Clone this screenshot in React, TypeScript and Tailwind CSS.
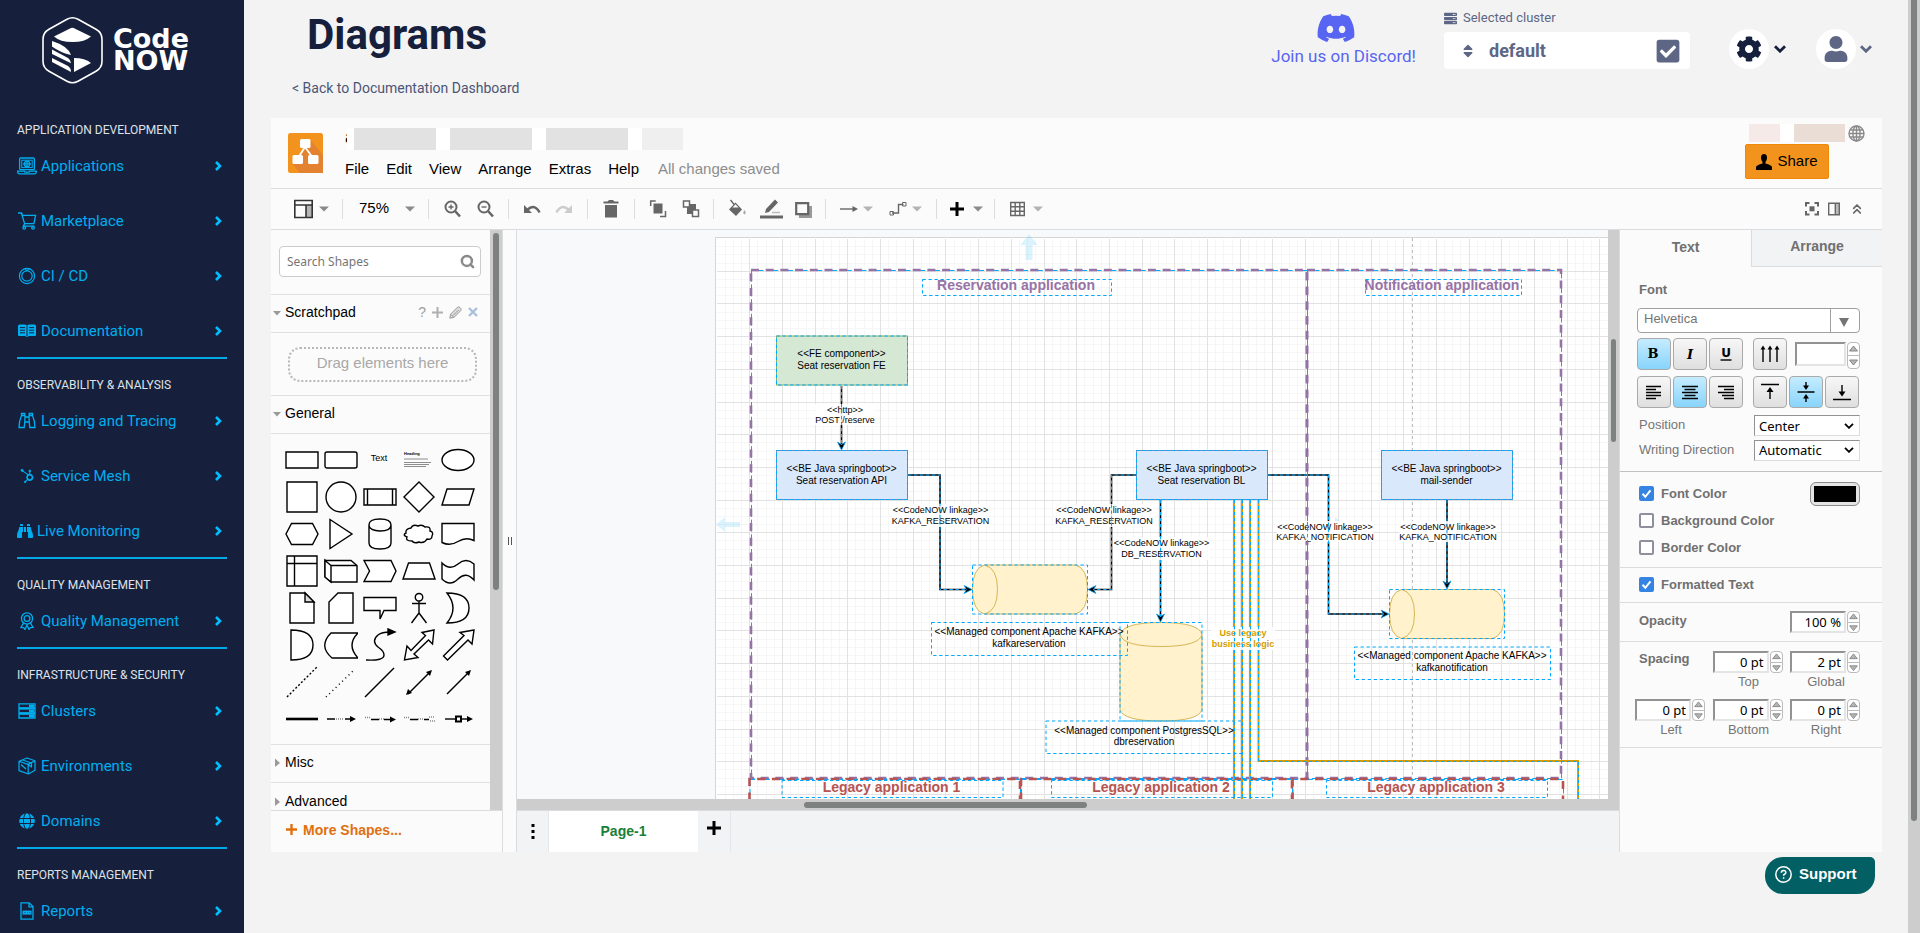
import React from "react";
import {
  FaBinoculars,
  FaCheckSquare,
  FaCog,
  FaDiscord,
  FaGlobe,
  FaHubspot,
  FaServer,
  FaSort,
  FaUser,
} from "react-icons/fa";
import { ChevronsUp, Search } from "lucide-react";

/* ---------------------------------------------------------------- sidebar */

const LaptopIcon = () => (
  <svg width="20" height="18" viewBox="0 0 20 18" fill="none" stroke="currentColor" strokeWidth="1.3">
    <rect x="2.6" y="1" width="14.8" height="11.6" rx="1.2" />
    <rect x="4.8" y="3.2" width="10.4" height="7.4" strokeWidth="1" />
    <circle cx="10" cy="6.9" r="2.7" />
    <path d="M6 6.9h8M10 4v6" />
    <path d="M.7 14.2h6.6l.6 1h4.2l.6-1h6.6v.8q0 1.8-1.8 1.8h-15Q.7 16.8.7 15z" />
  </svg>
);
const CartIcon = () => (
  <svg width="20" height="18" viewBox="0 0 20 18" fill="none" stroke="currentColor" strokeWidth="1.3">
    <path d="M1 1h3.4l3.2 10.6h9.3L18.6 3.4H5.2M4.6 3.4l.6-2.4M7.6 11.6l-1.2 2.5h11" />
    <circle cx="7.3" cy="15.8" r="1.3" />
    <circle cx="16" cy="15.8" r="1.3" />
  </svg>
);
const RingIcon = () => (
  <svg width="20" height="18" viewBox="0 0 20 18" fill="none" stroke="currentColor" strokeWidth="1.2">
    <circle cx="10" cy="9" r="7.6" />
    <circle cx="10" cy="9" r="5.2" />
    <path d="M7.6 1.4l2.4 2.4M12.4 1.4L10 3.8" />
  </svg>
);
const BookIcon = () => (
  <svg width="20" height="18" viewBox="0 0 20 18">
    <path d="M1 4q0-1.4 1.6-1.5H7q2.2 0 3 1.3.8-1.3 3-1.3h4.4Q19 2.6 19 4v9q0 1-1 1h-5.2q-1.8 0-2.8 1-1-1-2.8-1H2q-1 0-1-1z" fill="currentColor" />
    <path d="M3 5.6h5M3 8.2h5M3 10.8h5M12 5.6h5M12 8.2h5M12 10.8h5M10 4v10" stroke="#16203d" strokeWidth="1" />
  </svg>
);
const BinocularsIcon = () => (
  <svg width="20" height="18" viewBox="0 0 20 18" fill="none" stroke="currentColor" strokeWidth="1.3">
    <path d="M4.500 1.500h3.300v2H4.500zM12.200 1.500h3.300v2h-3.300zM4.500 3.500Q2 9 2 15.500h5.200q.8-5 .8-12M15.500 3.500Q18 9 18 15.500h-5.200q-.8-5-.8-12M8 5h4M8 10h4" />
  </svg>
);
const RibbonIcon = () => (
  <svg width="20" height="18" viewBox="0 0 20 18" fill="none" stroke="currentColor" strokeWidth="1.3">
    <circle cx="10" cy="6.500" r="5.600" />
    <circle cx="10" cy="6.500" r="2.900" />
    <path d="M6.500 11L4 15.500l2.600.1 1.400 1.900 2-4.500 2 4.500 1.400-1.900 2.600-.1-2.500-4.500" />
  </svg>
);
const ServersIcon = () => (
  <svg width="20" height="18" viewBox="0 0 20 18" fill="none" stroke="currentColor" strokeWidth="1.3">
    <path d="M2 1.800h16v4H2zM2 6.900h16v4H2zM2 12h16v4H2z" />
    <path d="M12 3.800h5M12 8.900h5M12 14h5" strokeWidth="2.400" />
    <path d="M2.500 6.300h15M2.500 11.400h15" strokeWidth="1.800" />
  </svg>
);
const CubeIcon = () => (
  <svg width="20" height="18" viewBox="0 0 20 18" fill="none" stroke="currentColor" strokeWidth="1.2" strokeLinejoin="round">
    <path d="M10 1L18 3.800v9.400L11.500 17 2 13.600V4.200zM2 4.200l9 3.200 7-3.600M11.200 7.400V17M5.500 3l9 3v4l-3.300-2.600M4 7.500l5 4.500" />
  </svg>
);
const FileIcon = () => (
  <svg width="20" height="18" viewBox="0 0 20 18" fill="none" stroke="currentColor" strokeWidth="1.3">
    <path d="M4 .8h8.200L16 4.600v12.600H4zM12 .8v4h4" />
    <path d="M5.500 8.600h9v4h-9z" fill="currentColor" stroke="none" />
    <path d="M7.500 10.600h1M10 10.600h.8M12.300 10.600h1" stroke="#16203d" strokeWidth=".8" />
  </svg>
);

type NavItem = { label: string; icon: React.ReactNode };
const NAV: { title: string; items: NavItem[] }[] = [
  {
    title: "APPLICATION DEVELOPMENT",
    items: [
      { label: "Applications", icon: <LaptopIcon /> },
      { label: "Marketplace", icon: <CartIcon /> },
      { label: "CI / CD", icon: <RingIcon /> },
      { label: "Documentation", icon: <BookIcon /> },
    ],
  },
  {
    title: "OBSERVABILITY & ANALYSIS",
    items: [
      { label: "Logging and Tracing", icon: <BinocularsIcon /> },
      { label: "Service Mesh", icon: <FaHubspot className="mx-[3px] size-[14px]" /> },
      { label: "Live Monitoring", icon: <FaBinoculars className="size-4" /> },
    ],
  },
  {
    title: "QUALITY MANAGEMENT",
    items: [{ label: "Quality Management", icon: <RibbonIcon /> }],
  },
  {
    title: "INFRASTRUCTURE & SECURITY",
    items: [
      { label: "Clusters", icon: <ServersIcon /> },
      { label: "Environments", icon: <CubeIcon /> },
      { label: "Domains", icon: <FaGlobe className="mx-[2px] size-4" /> },
    ],
  },
  { title: "REPORTS MANAGEMENT", items: [{ label: "Reports", icon: <FileIcon /> }] },
];

const Logo = () => (
  <svg width="244" height="100" viewBox="0 0 244 100" role="img" aria-label="Code NOW" className="shrink-0">
    <path d="M67 19.200q5.500-3 11 0l18 10q6 3.400 6 10v22q0 6.600-6 10l-18 10q-5.500 3-11 0l-18-10q-6-3.400-6-10v-22q0-6.600 6-10z" fill="none" stroke="#fff" strokeWidth="1.6" />
    <g fill="#fff">
      <path d="M54 36.500L71 28q1.300-.5 2.600 0L91 36.500Q85 42 72.500 42T54 36.500z" />
      <path d="M52 41q16 5 19 14-10-2-19-8.500z" />
      <path d="M52 49.500l16 8.500q3 2 3 5.200L52 54z" />
      <path d="M52 58l16 8q3 2 3 6L52 62z" />
      <path d="M74 58q11 0 17 5L74 72z" />
      <text x="113" y="48" fontFamily="DejaVu Sans" fontWeight="700" fontSize="27">Code</text>
      <text x="113" y="70" fontFamily="DejaVu Sans" fontWeight="700" fontSize="27">NOW</text>
    </g>
  </svg>
);

const Sidebar = () => (
  <aside className="flex w-[244px] shrink-0 flex-col overflow-hidden bg-[#16203d]">
    <Logo />
    <nav className="flex flex-col px-[17px] pt-[17px]">
      {NAV.map((group, i) => (
        <section key={group.title} className={i ? "border-t-2 border-[#02a9e8] pt-[14px]" : "pt-[1px]"}>
          <h2 className="h-6 text-xs leading-6 text-[#dfe2e8]">{group.title}</h2>
          <ul className="flex flex-col gap-[31px] pt-[12px] pb-[14px]">
            {group.items.map((item) => (
              <li key={item.label}>
                <a href="#" className="flex h-6 items-center gap-1 text-[15px] text-[#00aef0]">
                  {item.icon}
                  <span>{item.label}</span>
                  <svg width="7" height="10" viewBox="0 0 7 10" fill="none" stroke="#00bfff" strokeWidth="2.6" className="mr-[5px] ml-auto">
                    <path d="M1 1l4 4-4 4" />
                  </svg>
                </a>
              </li>
            ))}
          </ul>
        </section>
      ))}
    </nav>
  </aside>
);

/* ----------------------------------------------------------------- header */

const ChevronDown = () => (
  <svg width="12" height="8" viewBox="0 0 12 8" fill="none" stroke="currentColor" strokeWidth="2.8">
    <path d="M1 1.200l5 5 5-5" />
  </svg>
);

const PageHeader = () => (
  <header className="flex h-[118px] shrink-0 justify-between pr-9">
    <div className="pl-12">
      <h1 className="pt-[9px] pl-[15px] text-[42px] leading-[52px] font-bold text-[#16203d]">Diagrams</h1>
      <a href="#" className="block pt-[15px] text-sm leading-6 text-[#4b5575]">
        &lt; Back to Documentation Dashboard
      </a>
    </div>
    <div className="flex">
      <a href="#" className="mr-7 flex flex-col items-center pt-2 text-[17px] leading-6 text-[#5865f2]">
        <FaDiscord className="mr-4 size-10" />
        <span className="-mt-1">Join us on Discord!</span>
      </a>
      <div className="flex w-[246px] flex-col pt-1">
        <span className="flex h-7 items-center gap-[6px] text-[13px] text-[#5d6785]">
          <FaServer className="size-[13px]" />
          Selected cluster
        </span>
        <div className="flex h-[37px] items-center rounded bg-white pr-[9px] pl-4 text-[#5d6785]">
          <FaSort className="size-4" />
          <span className="ml-[13px] flex-1 text-[18px] font-bold">default</span>
          <FaCheckSquare className="size-[26px]" />
        </div>
      </div>
      <div className="flex items-start gap-[30px] pt-[29px] pl-[39px]">
        <button className="flex items-center gap-[5px] text-[#16203d]" aria-label="Settings">
          <span className="flex size-10 items-center justify-center rounded-full bg-white">
            <FaCog className="size-[26px]" />
          </span>
          <ChevronDown />
        </button>
        <button className="flex items-center gap-[4px] text-[#5d6785]" aria-label="Account">
          <span className="flex size-10 items-center justify-center rounded-full bg-white">
            <FaUser className="size-[26px]" />
          </span>
          <ChevronDown />
        </button>
      </div>
    </div>
  </header>
);

/* ------------------------------------------------------------ editor head */

const MENU = ["File", "Edit", "View", "Arrange", "Extras", "Help"];

const EditorHead = () => (
  <div className="flex h-[71px] shrink-0 border-b border-[#dadce0] pr-[17px] pl-[17px]">
    <svg width="35" height="40" viewBox="0 0 35 40" className="mt-[15px] shrink-0">
      <rect width="35" height="40" rx="2.5" fill="#f2931e" />
      <path d="M22 7l13 15v18H12L5 31l8-9 4-12z" fill="#e38230" />
      <path d="M17 14l-7 11M17 14l8 11" stroke="#fff" strokeWidth="1.8" />
      <g fill="#fff">
        <rect x="12" y="6" width="10.5" height="9" rx="1.5" />
        <rect x="4.5" y="22" width="10.5" height="9" rx="1.5" />
        <rect x="20" y="22" width="10.5" height="9" rx="1.5" />
      </g>
    </svg>
    <div className="pl-[22px]">
      <div className="flex h-[22px] items-start">
        <span className="mt-2 w-[9px] text-lg leading-[22px]">a</span>
        <div className="relative -ml-[7px] mt-[10px] flex h-[22px] gap-[14px] bg-white pl-[7px]">
          <span className="w-[82px] bg-[#e2e2e2]" />
          <span className="w-[82px] bg-[#e2e2e2]" />
          <span className="w-[82px] bg-[#e2e2e2]" />
          <span className="w-[41px] bg-[#efefef]" />
        </div>
      </div>
      <nav className="flex gap-[17px] pt-[18px] text-[15px] leading-[22px] text-black">
        {MENU.map((m) => (
          <button key={m}>{m}</button>
        ))}
        <span className="pl-[2px] text-[#8d8d8d]">All changes saved</span>
      </nav>
    </div>
    <div className="ml-auto flex flex-col items-start">
      <div className="flex h-[26px] items-center pt-1 pl-1">
        <span className="h-[18px] w-[31px] bg-[#f5eae8]" />
        <span className="h-[18px] w-[14px] bg-white" />
        <span className="mr-[3px] h-[18px] w-[51px] bg-[#eaddd5]" />
        <svg width="17" height="17" viewBox="0 0 17 17" fill="none" stroke="#8a8a8a" strokeWidth="1.4">
          <circle cx="8.5" cy="8.5" r="7.5" />
          <ellipse cx="8.5" cy="8.5" rx="3.6" ry="7.5" />
          <path d="M8.500 1v15M1 8.500h15M2.200 5h12.600M2.200 12h12.600" />
        </svg>
      </div>
      <button className="flex h-[35px] w-[84px] items-center justify-center gap-[5px] rounded-[2px] border border-[#f08705] bg-[#f2931e] text-[15px] text-black">
        <svg width="16" height="16" viewBox="0 0 16 16">
          <path d="M8 0q3 0 3 3.500Q11 7 9.500 8v1.500q6 1.500 6.500 3.500v3H0v-3q.5-2 6.500-3.500V8Q5 7 5 3.500 5 0 8 0z" />
        </svg>
        Share
      </button>
    </div>
  </div>
);

/* ---------------------------------------------------------------- toolbar */

const Caret = ({ className = "fill-[#8a8a8a]" }: { className?: string }) => (
  <svg width="10" height="6" viewBox="0 0 10 6" className={className}>
    <path d="M0 .5h10L5 5.500z" />
  </svg>
);

const ToolIcon = ({ label, width = 18, children }: { label: string; width?: number; children: React.ReactNode }) => (
  <button aria-label={label} className="flex items-center">
    <svg width={width} height="20" viewBox={`0 0 ${width} 20`} fill="none" stroke="#666" strokeWidth="2">
      {children}
    </svg>
  </button>
);

const Toolbar = () => (
  <div className="flex h-[41px] shrink-0 items-center border-b border-[#dadce0] pr-[17px]">
    <div className="flex h-5 w-[72px] items-center gap-[6px] border-r border-[#dadce0] pl-[23px]">
      <ToolIcon label="View layout" width={19}>
        <path d="M12 6h6v12h-6z" fill="#b5b5b5" stroke="none" />
        <path d="M.8 1.500h17.400v17H.8zM.8 6h17.400M12 6v12" stroke="#333" strokeWidth="1.6" />
      </ToolIcon>
      <Caret />
    </div>
    <div className="flex h-5 w-[86px] items-center justify-between border-r border-[#dadce0] pr-[13px] pl-4">
      <span className="pb-[2px] text-[15px] leading-5">75%</span>
      <Caret />
    </div>
    <div className="flex h-5 w-20 items-center justify-between border-r border-[#dadce0] px-[14px]">
      <ToolIcon label="Zoom in">
        <circle cx="8" cy="8" r="5.500" />
        <path d="M12 12l5 5.500" strokeWidth="2.600" />
        <path d="M5.500 8h5M8 5.500v5" strokeWidth="1.400" />
      </ToolIcon>
      <ToolIcon label="Zoom out">
        <circle cx="8" cy="8" r="5.500" />
        <path d="M12 12l5 5.500" strokeWidth="2.600" />
        <path d="M5.500 8h5" strokeWidth="1.400" />
      </ToolIcon>
    </div>
    <div className="flex h-5 w-[79px] items-center justify-between border-r border-[#dadce0] px-[14px]">
      <ToolIcon label="Undo">
        <path d="M1 6v8h8z" fill="#666" stroke="none" />
        <path d="M4 11q5.500-5 9.500-1.500 2 1.500 3 4" strokeWidth="2.400" />
      </ToolIcon>
      <ToolIcon label="Redo">
        <path d="M17 6v8H9z" fill="#ccc" stroke="none" />
        <path d="M14 11Q8.500 6 4.500 9.500q-2 1.500-3 4" stroke="#ccc" strokeWidth="2.400" />
      </ToolIcon>
    </div>
    <div className="flex h-5 w-[47px] items-center justify-center border-r border-[#dadce0]">
      <ToolIcon label="Delete">
        <path d="M3 6h12v12.500H3zM1.500 2.500h4L7 1h4l1.500 1.500h4v2h-15z" fill="#666" stroke="none" />
      </ToolIcon>
    </div>
    <div className="flex h-5 w-[79px] items-center justify-between border-r border-[#dadce0] pr-[13px] pl-[14px]">
      <ToolIcon label="To front">
        <path d="M4.500 4.500h9v10h-9z" fill="#666" stroke="none" />
        <path d="M1.700 7V2h5M11 17.500h5.500V12" strokeWidth="1.500" />
      </ToolIcon>
      <ToolIcon label="To back">
        <path d="M5 5h9v10H5z" fill="#666" stroke="none" />
        <path d="M1.500 2h6v6h-6zM10.500 11h6v6.500h-6z" strokeWidth="1.500" fill="#fbfbfb" />
      </ToolIcon>
    </div>
    <div className="flex h-5 w-28 items-center justify-between border-r border-[#dadce0] pr-[13px] pl-[14px]">
      <ToolIcon label="Fill color" width={19}>
        <path d="M7.500 3.500L14 10.500 8 17 1 10.500z" fill="#666" stroke="none" />
        <path d="M2.500 1L7 6.500" strokeWidth="1.400" />
        <path d="M4.500 8.500l3-3.200 3 3.200z" fill="#fbfbfb" stroke="none" />
        <path d="M16.500 11q2.500 3.500 0 4.500-2.500-1 0-4.500z" fill="#aaa" stroke="none" />
      </ToolIcon>
      <ToolIcon label="Line color" width={23}>
        <path d="M5 14l1-4L15 .5l3 3L9 13z" fill="#666" stroke="none" />
        <path d="M0 18h23" strokeWidth="3" />
        <path d="M12 13.500h8" stroke="#bbb" strokeWidth="1.500" />
      </ToolIcon>
      <ToolIcon label="Shadow" width={17}>
        <path d="M4 7h13v12H4z" fill="#999" stroke="none" />
        <path d="M1.200 4.200h12v11h-12z" fill="#fbfbfb" strokeWidth="2.200" />
      </ToolIcon>
    </div>
    <div className="flex h-5 w-[111px] items-center justify-between border-r border-[#dadce0] px-[14px]">
      <div className="flex items-center gap-[5px]">
        <ToolIcon label="Connection">
          <path d="M0 10h14" strokeWidth="1.400" />
          <path d="M12.500 7L18 10l-5.500 3z" fill="#666" stroke="none" />
        </ToolIcon>
        <Caret className="fill-[#b3b3b3]" />
      </div>
      <div className="flex items-center gap-[5px]">
        <ToolIcon label="Waypoints">
          <path d="M3 14h6.500V5.500h5" strokeWidth="1.400" />
          <path d="M1 12.500h3.500v3.500H1zM13.500 3.500H17V7h-3.500z" strokeWidth="1" />
        </ToolIcon>
        <Caret className="fill-[#b3b3b3]" />
      </div>
    </div>
    <div className="flex h-5 w-[58px] items-center gap-2 border-r border-[#dadce0] pl-3">
      <ToolIcon label="Insert" width={16}>
        <path d="M1 10h14M8 3v14" stroke="#000" strokeWidth="3" />
      </ToolIcon>
      <Caret />
    </div>
    <div className="flex h-5 items-center gap-2 pl-[15px]">
      <ToolIcon label="Table" width={15}>
        <path d="M.7 3.500h13.600v13H.7zM5.200 3.500v13M9.800 3.500v13M.7 7.800h13.600M.7 12.200h13.600" strokeWidth="1.400" />
      </ToolIcon>
      <Caret className="fill-[#b3b3b3]" />
    </div>
    <div className="ml-auto flex items-center gap-[9px]">
      <ToolIcon label="Fullscreen" width={14}>
        <path d="M1 7.500V4h3.500M9.500 4H13v3.500M13 12v3.500H9.500M4.500 15.500H1V12" />
        <path d="M4.500 7.300h5v5h-5z" fill="#666" stroke="none" />
      </ToolIcon>
      <ToolIcon label="Format panel" width={12}>
        <path d="M7.500 4.500h4v11h-4z" fill="#bbb" stroke="none" />
        <path d="M.7 4.200h10.600v11.600H.7zM7.300 4v12" strokeWidth="1.400" />
      </ToolIcon>
      <button aria-label="Collapse">
        <ChevronsUp className="size-4 text-[#666]" strokeWidth={2.500} />
      </button>
    </div>
  </div>
);

/* ------------------------------------------------------------ shape panel */

const SectionTitle = ({ title, open, children }: { title: string; open?: boolean; children?: React.ReactNode }) => (
  <div className="flex h-[38px] shrink-0 items-center pr-3 pb-[3px] pl-[2px] text-sm text-black">
    <button className="flex items-center gap-1">
      <svg width="8" height="10" viewBox="0 0 8 10" className="fill-[#9a9a9a]">
        {open ? <path d="M0 4h8L4 8.500z" /> : <path d="M2 1.500L7 6 2 10z" />}
      </svg>
      {title}
    </button>
    {children}
  </div>
);

const SHAPES: React.ReactNode[] = [
  <path d="M0 8h32v16H0z" />,
  <rect x="0" y="8" width="32" height="16" rx="2" />,
  <text x="15" y="17" fontSize="9" textAnchor="middle" fill="#000" stroke="none">Text</text>,
  <g stroke="none" fill="#444">
    <text x="1" y="11" fontSize="4" fontWeight="700" fill="#000">Heading</text>
    <path d="M1 14.500h24v1H1zM1 18h27v1H1zM1 20h25v1H1zM1 22h22v1H1z" opacity=".6" />
  </g>,
  <ellipse cx="16" cy="16" rx="16" ry="10.500" />,
  <path d="M1 1h30v30H1z" />,
  <circle cx="16" cy="16" r="15" />,
  <path d="M0 8h32v16H0zM3.500 8v16M28.500 8v16" />,
  <path d="M16 1l15 15-15 15L1 16z" />,
  <path d="M5 8h27l-5 16H0z" />,
  <path d="M5.500 5.500h21L32 16l-5.500 10.500h-21L0 16z" />,
  <path d="M5 1.500L27 16 5 30.500z" />,
  <path d="M5 7v18q0 6 11 6t11-6V7M5 7q0-6 11-6t11 6-11 6S5 13 5 7z" />,
  <path d="M8 10q2-4 7-2 4-2 7 1 6-1 5 4 4 1 2 5 0 4-5 3-3 5-8 3-5 2-7-1-7 0-5-4-5-2-1-4-1-4 5-5z" />,
  <path d="M0 5.500h32v17q-8-4-16 1t-16 1z" />,
  <path d="M1 1h30v30H1zM1 8.500h30M8.500 1v30" />,
  <g>
    <path d="M0 5l6 5v17l-6-5z" fill="#ddd" />
    <path d="M0 5.500h26l6 5v16.500H6l-6-5zM6 27V10.500h26M6 10.500l-6-5" />
  </g>,
  <path d="M0 5.500h27L32 16l-5 10.500H0L5.500 16z" />,
  <path d="M5.500 8h21L32 24H0z" />,
  <path d="M0 8q8 8 16 1t16 0v16q-8-9-16-1T0 24z" />,
  <g>
    <path d="M4 1h15l9 9v21H4z" />
    <path d="M19 1v9h9z" fill="#ddd" />
  </g>,
  <path d="M13 1h15v30H4V10z" />,
  <path d="M0 5.500h32v13H20L16 27v-8.500H0z" />,
  <path d="M16 9v12M9 11.500h14M16 21L8.500 31M16 21l7.500 10M16 1.500a3.700 3.700 0 100 7.500 3.700 3.700 0 000-7.500z" />,
  <path d="M5 1q22 0 22 15T5 31q12-15 0-30z" />,
  <path d="M5 1q22 0 22 15T5 31z" />,
  <path d="M6 4h27q-12 12 0 25H7Q-7 17 6 4z" />,
  <g>
    <path d="M2 31q18 1 18-5 0-4-6-8-7-6 0-12 4-3 12-3" fill="none" />
    <path d="M24 0l7 3-7 3z" fill="#000" />
  </g>,
  <path d="M31 1L19 3.500l3.500 3L8 21.500 4 17 1.500 31 15 28.500l-4-3.500L25.500 11l4 4z" />,
  <path d="M32 1L18 3.500l4 3L1.500 27l4 4L26 11l4 4z" />,
  <path d="M1 31L31 1" strokeDasharray="2 2" />,
  <path d="M1 31L29 4" strokeDasharray="1 3.500" />,
  <path d="M1 31L30 2" />,
  <g>
    <path d="M5 28L26 7" />
    <path d="M29 4l-2 6-4-4zM3 29l2-6 4 4z" fill="#000" stroke="none" />
  </g>,
  <g>
    <path d="M5 28L26 7" />
    <path d="M29 4l-2 6-4-4z" fill="#000" stroke="none" />
  </g>,
  <path d="M0 16h32" strokeWidth="2.600" />,
  <g>
    <path d="M2 16h8M20 16h6" />
    <path d="M11 16h8" stroke="#888" strokeDasharray="1 1" />
    <path d="M25 13l6 3-6 3z" fill="#000" stroke="none" />
  </g>,
  <g>
    <path d="M7 16.500h8M20 16.500h7" />
    <path d="M1 14.500h5M15 16h5" stroke="#888" strokeDasharray="1 1" />
    <path d="M26 13.500l6 3-6 3z" fill="#000" stroke="none" />
  </g>,
  <g>
    <path d="M7 16.500h8M21 16.500h5" />
    <path d="M1 14.500h5M15 16h5M26 14h6M27 18h5" stroke="#888" strokeDasharray="1 1" />
  </g>,
  <g>
    <path d="M3 16h22" />
    <path d="M14 13.500h5v5h-5z" strokeWidth="2" />
    <path d="M25 13l6 3-6 3z" fill="#000" stroke="none" />
  </g>,
];

const ShapePanel = () => (
  <div className="flex w-[232px] shrink-0 flex-col border-r border-[#dadce0]">
    <div className="flex min-h-0 flex-1">
      <div className="flex min-w-0 flex-1 flex-col divide-y divide-[#e0e0e0] overflow-hidden">
        <div className="h-[65px] shrink-0 px-2 pt-4">
          <label className="flex h-[31px] w-[202px] items-center justify-between rounded border border-[#ccc] bg-white pr-[5px] pl-[7px]">
            <input
              type="search"
              aria-label="Search Shapes"
              placeholder="Search Shapes"
              className="w-32 font-['Noto_Sans',sans-serif] text-xs text-black outline-none placeholder:text-[#757575]"
            />
            <Search className="size-[15px] text-[#8a8a8a]" strokeWidth={4} />
          </label>
        </div>
        <SectionTitle title="Scratchpad" open>
          <div className="ml-auto flex items-center gap-[6px] text-[#a0a0a0]">
            <button aria-label="Help" className="text-sm leading-4">?</button>
            <svg width="11" height="11" viewBox="0 0 11 11" stroke="#b0b0b0" strokeWidth="2">
              <path d="M0 5.500h11M5.500 0v11" />
            </svg>
            <svg width="13" height="13" viewBox="0 0 13 13" fill="#ddd" stroke="#999">
              <path d="M.8 12.200l.8-4L8.500 1.200q1-.8 2 0l1.300 1.300q.8 1 0 2L5 11.400zM2 8.500L4.500 11M4 9.500l5.500-5.500" />
            </svg>
            <svg width="10" height="10" viewBox="0 0 10 10" stroke="#a9c1dc" strokeWidth="2.400">
              <path d="M1 1l8 8M9 1L1 9" />
            </svg>
          </div>
        </SectionTitle>
        <div className="h-[63px] shrink-0 px-[13px] pt-[14px] pl-[17px]">
          <div className="flex h-[35px] items-center justify-center rounded-xl border-2 border-dotted border-[#b8b8b8] pb-[3px] text-[15px] text-[#a8a8a8]">
            Drag elements here
          </div>
        </div>
        <SectionTitle title="General" open />
        <div className="grid h-[311px] shrink-0 auto-rows-[37px] grid-cols-[repeat(5,39px)] content-start pt-[7px] pl-[11px]">
          {SHAPES.map((shape, i) => (
            <button key={i} aria-label={`Shape ${i + 1}`} className="flex items-center justify-center">
              <svg width="34" height="34" viewBox="-1 -1 34 34" fill="#fff" stroke="#000" strokeWidth="1.4">
                {shape}
              </svg>
            </button>
          ))}
        </div>
        <SectionTitle title="Misc" />
        <SectionTitle title="Advanced" />
      </div>
      <div className="w-3 shrink-0 bg-[#cdcdcd] px-[3px] pt-[3px]">
        <div className="h-[357px] rounded-full bg-[#7d8180]" />
      </div>
    </div>
    <button className="flex h-[42px] shrink-0 items-center gap-[6px] border-t border-[#dadce0] pb-1 pl-[15px] text-sm font-bold text-[#e0700f]">
      <svg width="11" height="11" viewBox="0 0 11 11" stroke="currentColor" strokeWidth="2.4">
        <path d="M0 5.500h11M5.500 0v11" />
      </svg>
      More Shapes...
    </button>
  </div>
);

/* ----------------------------------------------------------------- canvas */

const BLUE = "#00a8ff";
const STEP = 32.7;

const Sel = ({ d }: { d: string }) => <path d={d} fill="none" stroke={BLUE} strokeDasharray="3.3 2.7" />;

const box = (x: number, y: number, w: number, h: number) => `M${x} ${y}h${w}v${h}h${-w}z`;

const Lines = ({ x, y, lines, size = 10, gap = 11, bg, ...rest }: { x: number; y: number; lines: string[]; size?: number; gap?: number; bg?: number } & React.SVGProps<SVGTextElement>) => (
  <g>
    {bg && <rect x={x - bg / 2} y={y - 9} width={bg} height={gap * lines.length + 1} fill="#fff" fillOpacity=".9" />}
    {lines.map((line, i) => (
      <text key={line} x={x} y={y + i * gap} fontSize={size} textAnchor="middle" {...rest}>
        {line}
      </text>
    ))}
  </g>
);

const Node = ({ x, y, fill, stroke, lines }: { x: number; y: number; fill: string; stroke: string; lines: string[] }) => (
  <g>
    <rect x={x} y={y} width="131" height="49" fill={fill} stroke={stroke} />
    <Sel d={box(x, y, 131, 49)} />
    <Lines x={x + 65} y={y + 21} lines={lines} gap={12} />
  </g>
);

const HEADS: Record<string, (x: number, y: number) => string> = {
  down: (x, y) => `M${x} ${y}l-4-8 4 2.500 4-2.500z`,
  right: (x, y) => `M${x} ${y}l-8-4 2.500 4-2.500 4z`,
  left: (x, y) => `M${x} ${y}l8-4-2.500 4 2.500 4z`,
};

const EDGES = [
  { d: "M841.500 386V444", dir: "down", x: 841.5, y: 450 },
  { d: "M908 475H940V589.500H967", dir: "right", x: 972, y: 589.5 },
  { d: "M1136 475H1111.500V589.500H1093", dir: "left", x: 1088, y: 589.5 },
  { d: "M1160.500 500V617", dir: "down", x: 1160.5, y: 622 },
  { d: "M1268 475H1328.500V614H1384", dir: "right", x: 1389, y: 614 },
  { d: "M1447 500V584", dir: "down", x: 1447, y: 589 },
];

const FRAMES = [
  { d: "M751 270H1307V778H751z", color: "#9673a6" },
  { d: "M1307 270H1561V778H1307z", color: "#9673a6" },
  { d: "M749.500 830V779H1020V830", color: "#b85450" },
  { d: "M1021 830V779H1292V830", color: "#b85450" },
  { d: "M1292.500 830V779H1563V830", color: "#b85450" },
];

const HCylinder = ({ x, y }: { x: number; y: number }) => (
  <g>
    <path d={`M${x + 12} ${y}h91q12 3 12 24.500t-12 24.500h-91q-12-3-12-24.500t12-24.500z`} fill="#fff2cc" stroke="#d6b656" />
    <path d={`M${x + 12} ${y}q13 3 13 24.500t-13 24.500`} fill="none" stroke="#d6b656" />
    <Sel d={box(x, y, 115, 49)} />
  </g>
);

const Grid = () => {
  const minor: string[] = [];
  const major: string[] = [];
  for (let i = 1; i < 28 * 4; i++) {
    const p = Math.round(716.5 + (STEP / 4) * i) + 0.5;
    if (p < 1608) (i % 4 ? minor : major).push(`M${p} 239V799`);
  }
  for (let i = 1; i < 18 * 4; i++) {
    const p = Math.round(238 + (STEP / 4) * i) + 0.5;
    if (p < 799) (i % 4 ? minor : major).push(`M717 ${p}H1608`);
  }
  return (
    <g>
      <path d={minor.join("")} stroke="#f6f6f6" />
      <path d={major.join("")} stroke="#e2e2e2" />
    </g>
  );
};

const Diagram = () => {
  const green = { fill: "#d5e8d4", stroke: "#82b366" };
  const blue = { fill: "#dae8fc", stroke: "#6c8ebf" };
  return (
    <svg width="1091" height="569" viewBox="517 230 1091 569" fontFamily="Liberation Sans, Arial, sans-serif" className="block shrink-0" role="img" aria-label="Reservation diagram">
      <rect x="715.5" y="237.5" width="960" height="600" fill="#fff" stroke="#d6d6d6" />
      <Grid />
      <path d="M1412.500 238V799" stroke="#bdbdbd" strokeDasharray="3 3" />
      <g fill="#29b6f2" fillOpacity=".17">
        <path d="M1029 234l8.500 11h-5v15h-7v-15h-5z" />
        <path d="M716 524.500l9-7.500v5h15v5h-15v5z" />
        <path d="M1344 524.500l-9-7.500v5h-13v5h13v5z" />
      </g>

      {FRAMES.map(({ d }) => (
        <path key={d} d={d} fill="none" stroke={BLUE} strokeDasharray="3.3 2.7 6 2.7" transform="translate(.5 .5)" />
      ))}
      {FRAMES.map(({ d, color }) => (
        <path key={d} d={d} fill="none" stroke={color} strokeWidth="2.6" strokeDasharray="8 6.7" />
      ))}
      <path d="M1234 500V799M1242 500V799M1250 500V799M1258.500 500V761H1578V799" fill="none" stroke="#d79b00" strokeWidth="2" />
      {EDGES.map(({ d, dir, x, y }) => (
        <g key={d}>
          <path d={d} fill="none" stroke="#000" strokeWidth="1.6" />
          <path d={HEADS[dir](x, y)} fill="#000" stroke={BLUE} strokeWidth=".7" />
        </g>
      ))}

      <Node x={776.5} y={336} {...green} lines={["<<FE component>>", "Seat reservation FE"]} />
      <Node x={776.5} y={450.5} {...blue} lines={["<<BE Java springboot>>", "Seat reservation API"]} />
      <Node x={1136.5} y={450.5} {...blue} lines={["<<BE Java springboot>>", "Seat reservation BL"]} />
      <Node x={1381.5} y={450.5} {...blue} lines={["<<BE Java springboot>>", "mail-sender"]} />

      <HCylinder x={972.5} y={565} />
      <HCylinder x={1389.5} y={589.5} />
      <path d="M1120 634.500v75q3 11.500 41 11.500t41-11.500v-75q-3-12-41-12t-41 12z" fill="#fff2cc" stroke="#d6b656" />
      <path d="M1120 634.500q3 12 41 12t41-12" fill="none" stroke="#d6b656" />

      <Lines x={1016} y={290} lines={["Reservation application"]} size={14} fontWeight="700" fill="#9673a6" />
      <Lines x={1442} y={290} lines={["Notification application"]} size={14} fontWeight="700" fill="#9673a6" />
      <Lines x={891.5} y={792} lines={["Legacy application 1"]} size={14} fontWeight="700" fill="#b85450" />
      <Lines x={1161} y={792} lines={["Legacy application 2"]} size={14} fontWeight="700" fill="#b85450" />
      <Lines x={1436} y={792} lines={["Legacy application 3"]} size={14} fontWeight="700" fill="#b85450" />

      <Lines x={845} y={413} lines={["<<http>>", "POST /reserve"]} size={9} gap={10} bg={60} />
      <Lines x={940.5} y={513} lines={["<<CodeNOW linkage>>", "KAFKA_RESERVATION"]} size={9} bg={97} />
      <Lines x={1104} y={513} lines={["<<CodeNOW linkage>>", "KAFKA_RESERVATION"]} size={9} bg={97} />
      <Lines x={1161.5} y={546} lines={["<<CodeNOW linkage>>", "DB_RESERVATION"]} size={9} bg={97} />
      <Lines x={1325} y={530} lines={["<<CodeNOW linkage>>", "KAFKA_NOTIFICATION"]} size={9} gap={10} bg={97} />
      <Lines x={1448} y={530} lines={["<<CodeNOW linkage>>", "KAFKA_NOTIFICATION"]} size={9} gap={10} bg={97} />
      <Lines x={1243} y={636} lines={["Use legacy", "business logic"]} size={9} bg={64} fontWeight="700" fill="#d79b00" />
      <Lines x={1029} y={635} lines={["<<Managed component Apache KAFKA>>", "kafkareservation"]} gap={12} />
      <Lines x={1144} y={734} lines={["<<Managed component PostgresSQL>>", "dbreservation"]} />
      <Lines x={1452} y={659} lines={["<<Managed component Apache KAFKA>>", "kafkanotification"]} gap={12} />

      {EDGES.map(({ d }) => (
        <Sel key={d} d={d} />
      ))}
      <Sel d="M1307.500 270V778" />
      <Sel d="M1234.500 500V799M1242.500 500V799M1250.500 500V799M1258.500 500V761.500H1578.500V799" />
      <Sel d={box(1120, 622.5, 82, 98.5)} />
      <Sel d={box(922.5, 279.5, 189, 16)} />
      <Sel d={box(1365.5, 279.5, 156, 16)} />
      <Sel d={box(931.5, 622.5, 196, 33)} />
      <Sel d={box(1046, 721, 196, 32.5)} />
      <Sel d={box(1354.5, 647, 196, 32.5)} />
      <Sel d={box(782, 780.5, 221, 17)} />
      <Sel d={box(1051.5, 780.5, 221, 17)} />
      <Sel d={box(1326.5, 780.5, 221, 17)} />
    </svg>
  );
};

const Canvas = () => (
  <div className="flex min-w-0 flex-1 flex-col">
    <div className="flex min-h-0 flex-1">
      <div className="min-w-0 flex-1 overflow-hidden bg-[#f8f9fb]">
        <Diagram />
      </div>
      <div className="w-[11px] shrink-0 bg-[#cdcdcd] px-[3px] pt-[109px]">
        <div className="h-[103px] rounded-full bg-[#7d8180]" />
      </div>
    </div>
    <div className="h-[11px] shrink-0 bg-[#cdcdcd] pt-[3px] pl-[287px]">
      <div className="h-[6px] w-[283px] rounded-full bg-[#7d8180]" />
    </div>
    <div className="flex h-[42px] shrink-0 border-t border-[#dadce0] bg-[#f1f3f4]">
      <button aria-label="Pages" className="flex w-8 items-center justify-center border-r border-[#e4e6ea]">
        <svg width="4" height="15" viewBox="0 0 4 15">
          <path d="M.5 0h3v3h-3zM.5 6h3v3h-3zM.5 12h3v3h-3z" />
        </svg>
      </button>
      <button className="w-[149px] bg-white pb-[2px] text-sm font-bold text-[#188038]">Page-1</button>
      <button aria-label="Insert page" className="flex w-[33px] justify-center border-r border-[#e4e6ea] pt-[10px]">
        <svg width="14" height="14" viewBox="0 0 14 14" stroke="#000" strokeWidth="3">
          <path d="M0 7h14M7 0v14" />
        </svg>
      </button>
    </div>
  </div>
);

/* ----------------------------------------------------------- format panel */

const FormatButton = ({ label, active, children }: { label: string; active?: boolean; children: React.ReactNode }) => (
  <button
    aria-label={label}
    className={`flex h-8 w-[34px] items-center justify-center rounded border border-[#a9a9a9] bg-linear-to-b ${
      active ? "from-[#c5ecff] to-[#87d4fb]" : "from-[#f7f7f7] to-[#dfdfdf]"
    }`}
  >
    <svg width="22" height="20" viewBox="0 0 22 20" fill="none" stroke="#000" strokeWidth="1.4">
      {children}
    </svg>
  </button>
);

const Spinner = ({ tall }: { tall?: boolean }) => (
  <span className={`flex w-[13px] flex-col divide-y divide-[#bbb] rounded border border-[#bbb] bg-white ${tall ? "h-[27px]" : "h-[22px]"}`}>
    <svg viewBox="0 0 11 10" className="min-h-0 flex-1 fill-[#b5b5b5] stroke-[#888]">
      <path d="M5.500 2l4 5h-8z" />
    </svg>
    <svg viewBox="0 0 11 10" className="min-h-0 flex-1 fill-[#b5b5b5] stroke-[#888]">
      <path d="M5.500 8l4-5h-8z" />
    </svg>
  </span>
);

const Stepper = ({ value, name, caption }: { value: string; name: string; caption?: string }) => (
  <label className="grid w-[70px] grid-cols-[56px_13px] gap-x-px text-[13px] leading-4 text-[#757575]">
    <input
      defaultValue={value}
      aria-label={name}
      className="h-[22px] border-2 border-t-[#929292] border-r-[#e4e4e4] border-b-[#e4e4e4] border-l-[#929292] bg-white pr-[3px] text-right font-['Noto_Sans',sans-serif] text-[13px] text-black outline-none"
    />
    <Spinner />
    {caption && <span className="col-span-2 pt-px pl-[2px] text-center">{caption}</span>}
  </label>
);

const Check = ({ label, checked, children }: { label: string; checked?: boolean; children?: React.ReactNode }) => (
  <div className="flex h-[15px] items-center justify-between">
    <label className="flex items-center gap-[7px] text-[13px] leading-4 font-bold text-[#707070]">
      <span className="grid size-[15px]">
        <input
          type="checkbox"
          defaultChecked={checked}
          className="col-start-1 row-start-1 size-[15px] appearance-none rounded-[2px] border-2 border-[#8f8f9d] bg-white checked:border-[#3584e4] checked:bg-[#3584e4]"
        />
        <svg viewBox="0 0 15 15" className="pointer-events-none col-start-1 row-start-1" fill="none" stroke="#fff" strokeWidth="2">
          {checked && <path d="M3.500 7.800l2.800 3 5.200-6.500" />}
        </svg>
      </span>
      {label}
    </label>
    {children}
  </div>
);

const Dropdown = ({ label, value, options }: { label: string; value: string; options: string[] }) => (
  <label className="flex items-center justify-between pl-[2px] text-[13px] text-[#757575]">
    <span className="pb-[2px]">{label}</span>
    <span className="grid w-[106px]">
      <select
        defaultValue={value}
        className="col-start-1 row-start-1 h-[21px] appearance-none border border-t-[#929292] border-r-[#dcdcdc] border-b-[#dcdcdc] border-l-[#929292] bg-white pl-1 font-['Noto_Sans',sans-serif] text-[13px] leading-4 text-black"
      >
        {options.map((o) => (
          <option key={o}>{o}</option>
        ))}
      </select>
      <svg width="10" height="6" viewBox="0 0 10 6" fill="none" stroke="#000" strokeWidth="1.8" className="pointer-events-none col-start-1 row-start-1 mr-[6px] self-center justify-self-end">
        <path d="M1 .8l4 4 4-4" />
      </svg>
    </span>
  </label>
);

const FormatPanel = () => (
  <div className="flex w-[263px] shrink-0 flex-col border-l border-[#dadce0] bg-[#fbfbfb]">
    <div className="grid h-[37px] shrink-0 grid-cols-2 text-sm font-bold text-[#707070]">
      <button className="pb-[3px]">Text</button>
      <button className="border-b border-l border-[#dadce0] bg-[#f1f3f4] pb-1">Arrange</button>
    </div>

    <div className="flex flex-col border-b border-[#c0c0c0] pt-[15px] pr-[22px] pb-[10px] pl-[17px]">
      <h3 className="pl-[2px] text-[13px] leading-4 font-bold text-[#707070]">Font</h3>
      <button className="mt-[10px] flex h-[25px] rounded border border-[#a0a0a0] bg-white text-[13px] leading-4 text-[#757575]">
        <span className="flex-1 pt-[2px] pl-[6px] text-left">Helvetica</span>
        <span className="flex h-full w-[29px] items-center justify-center border-l border-[#a0a0a0] pt-[3px] pr-[2px]">
          <svg width="10" height="9" viewBox="0 0 10 9" fill="#757575">
            <path d="M0 0h10L5 9z" />
          </svg>
        </span>
      </button>
      <div className="mt-[5px] flex gap-[2px]">
        <FormatButton label="Bold" active>
          <text x="10" y="14" textAnchor="middle" fontFamily="DejaVu Serif" fontWeight="700" fontSize="13" fill="#000" stroke="none">B</text>
        </FormatButton>
        <FormatButton label="Italic">
          <text x="11" y="15" textAnchor="middle" fontFamily="DejaVu Serif" fontStyle="italic" fontWeight="700" fontSize="13" fill="#000" stroke="none">I</text>
        </FormatButton>
        <FormatButton label="Underline">
          <text x="11" y="13" textAnchor="middle" fontFamily="DejaVu Sans" fontWeight="700" fontSize="12" fill="#000" stroke="none">U</text>
          <path d="M5.500 16h11" />
        </FormatButton>
        <span className="w-[6px]" />
        <FormatButton label="Vertical text">
          <path d="M4 18V4M11 18V4M18 18V4" />
          <path d="M1.500 5.500L4 1.500l2.500 4zM8.500 5.500l2.500-4 2.500 4zM15.500 5.500l2.500-4 2.500 4z" fill="#000" stroke="none" />
        </FormatButton>
        <span className="ml-[6px] flex items-start gap-px pt-1">
          <input aria-label="Font size" className="h-6 w-[51px] border-2 border-t-[#929292] border-r-[#e4e4e4] border-b-[#e4e4e4] border-l-[#929292] bg-white" />
          <Spinner tall />
        </span>
      </div>
      <div className="mt-[6px] flex gap-[2px]">
        <FormatButton label="Align left">
          <path d="M3 4.500h15M3 7.500h10M3 10.500h15M3 13.500h15M3 16.500h10" />
        </FormatButton>
        <FormatButton label="Align center" active>
          <path d="M3 4.500h16M5.500 7.500h11M3 10.500h16M5.500 13.500h11M3 16.500h16" />
        </FormatButton>
        <FormatButton label="Align right">
          <path d="M3 4.500h16M9 7.500h10M3 10.500h16M7 13.500h12M9 16.500h10" />
        </FormatButton>
        <span className="w-[6px]" />
        <FormatButton label="Align top">
          <path d="M2 2.500h18M11 17V7" />
          <path d="M7.500 10L11 5l3.500 5z" fill="#000" stroke="none" />
        </FormatButton>
        <FormatButton label="Align middle" active>
          <path d="M2.500 10h17M11 0v5M11 20v-5" />
          <path d="M8 3.500h6L11 8zM8 16.500h6L11 12z" fill="#000" stroke="none" />
        </FormatButton>
        <FormatButton label="Align bottom">
          <path d="M2 17.500h18M11 3v9" />
          <path d="M7.500 9.500L11 14.500l3.500-5z" fill="#000" stroke="none" />
        </FormatButton>
      </div>
      <div className="mt-[7px] flex flex-col gap-[3px]">
        <Dropdown label="Position" value="Center" options={["Center", "Left", "Right"]} />
        <Dropdown label="Writing Direction" value="Automatic" options={["Automatic", "Left to Right"]} />
      </div>
    </div>

    <div className="flex flex-col gap-3 border-b border-[#dadce0] pt-[14px] pr-[22px] pb-3 pl-[19px]">
      <Check label="Font Color" checked>
        <button aria-label="Pick font color" className="h-6 w-[50px] rounded-md border border-[#8a8a8a] bg-[#e4e4e4] p-[3px]">
          <span className="block h-full bg-black" />
        </button>
      </Check>
      <Check label="Background Color" />
      <Check label="Border Color" />
    </div>
    <div className="border-b border-[#dadce0] pt-[9px] pb-[10px] pl-[19px]">
      <Check label="Formatted Text" checked />
    </div>
    <div className="flex justify-between border-b border-[#dadce0] py-2 pr-[22px] pl-[19px]">
      <span className="text-[13px] leading-5 font-bold text-[#707070]">Opacity</span>
      <Stepper name="Opacity" value="100 %" />
    </div>
    <div className="grid grid-cols-[repeat(3,70px)] justify-between gap-y-[9px] border-b border-[#dadce0] py-[9px] pr-[22px] pl-[15px]">
      <span className="pl-1 text-[13px] leading-4 font-bold text-[#707070]">Spacing</span>
      <Stepper name="Top spacing" value="0 pt" caption="Top" />
      <Stepper name="Global spacing" value="2 pt" caption="Global" />
      <Stepper name="Left spacing" value="0 pt" caption="Left" />
      <Stepper name="Bottom spacing" value="0 pt" caption="Bottom" />
      <Stepper name="Right spacing" value="0 pt" caption="Right" />
    </div>
  </div>
);

/* -------------------------------------------------------------------- app */

export default function App() {
  return (
    <div className="relative flex h-screen overflow-hidden bg-[#f3f3f3] font-[Roboto,sans-serif]">
      <Sidebar />
      <main className="flex min-w-0 flex-1 flex-col">
        <PageHeader />
        <div className="mr-[26px] mb-[81px] ml-[27px] flex min-h-0 flex-1 flex-col bg-[#fbfbfb] font-['Liberation_Sans',Arial,sans-serif]">
          <EditorHead />
          <Toolbar />
          <div className="flex min-h-0 flex-1">
            <ShapePanel />
            <div className="flex w-[14px] shrink-0 items-center justify-center border-r border-[#dadce0]">
              <svg width="4" height="8" viewBox="0 0 4 8" stroke="#555">
                <path d="M.5 0v8M3.500 0v8" />
              </svg>
            </div>
            <Canvas />
            <FormatPanel />
          </div>
        </div>
      </main>
      <div className="w-3 shrink-0 bg-[#cdcdcd] px-[3px]">
        <div className="h-[88%] rounded-b-full bg-[#7d8180]" />
      </div>
      <button className="absolute right-[45px] bottom-[39px] flex h-[37px] w-[110px] items-center gap-[7px] rounded-[18px] rounded-tr-[5px] bg-[#026064] pb-[2px] pl-[10px] font-['Liberation_Sans',Arial,sans-serif] text-[15px] font-bold text-white">
        <svg width="17" height="17" viewBox="0 0 17 17" fill="none" stroke="#fff" strokeWidth="1.5">
          <circle cx="8.5" cy="8.5" r="7.7" />
          <path d="M6.300 6.800q0-2.300 2.300-2.300t2.200 2q0 1.200-1.300 1.800-.9.400-.9 1.500M8.600 11.200v1.600" />
        </svg>
        Support
      </button>
    </div>
  );
}
